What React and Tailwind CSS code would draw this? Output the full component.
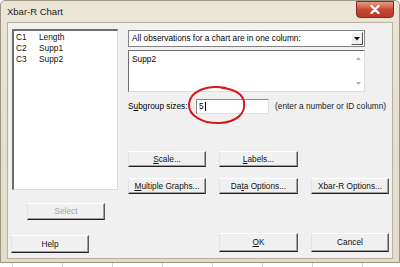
import React from 'react';

const btn =
  'flex items-center justify-center whitespace-nowrap bg-[#f0f0f0] border border-t-white border-l-[#e3e3e3] border-r-[#5a5a5a] border-b-[#1e1e1e] shadow-[inset_-1px_-1px_0_#a0a0a0] text-[#111]';

function Btn({ className = '', children, disabled }) {
  return (
    <div className={`${btn} ${className} ${disabled ? 'text-[#a6a6a6]' : ''}`}>
      {children}
    </div>
  );
}

const U = ({ children }) => <span className="underline underline-offset-1">{children}</span>;

export default function App() {
  return (
    <div
      className="w-[400px] h-[267px] bg-white relative overflow-hidden text-[8.3px] leading-none"
      style={{ fontFamily: '"Liberation Sans", Arial, sans-serif' }}
    >
      {/* window */}
      <div className="w-[400px] h-[263px] bg-gradient-to-b from-[#ebe5d6] to-[#e2dbc8] border border-[#9d9683] rounded-t-[5px] flex flex-col">
        <div className="h-[21px] flex items-center justify-between pl-[6px] pr-[5px]">
          <span className="text-[9.5px] text-[#1d1d1d]">Xbar-R Chart</span>
          <div className="w-[38px] h-[17px] -mt-[4px] rounded-b-[4px] bg-gradient-to-b from-[#e79a88] via-[#c94a33] to-[#b5382a] border border-[#7a2b22] flex items-center justify-center">
            <svg width="10" height="9" viewBox="0 0 10 9">
              <path d="M1.5 1 L8.5 8 M8.5 1 L1.5 8" stroke="white" strokeWidth="2.2" strokeLinecap="round" />
            </svg>
          </div>
        </div>

        {/* client area */}
        <div className="mx-[6px] h-[237px] bg-[#f0f0f0] border border-[#b8b09b] flex pt-[6px] pl-[4px]">
          {/* left column */}
          <div className="w-[106px] flex flex-col">
            <div className="h-[161px] bg-white border-t-2 border-l-2 border-r border-b border-t-[#6d6d6d] border-l-[#6d6d6d] border-r-[#dcdcdc] border-b-[#dcdcdc] pt-px pl-[2px] text-[#111]">
              {[
                ['C1', 'Length'],
                ['C2', 'Supp1'],
                ['C3', 'Supp2'],
              ].map(([c, n]) => (
                <div key={c} className="flex h-[11px] items-center">
                  <span className="w-[23px]">{c}</span>
                  <span>{n}</span>
                </div>
              ))}
            </div>
            <Btn disabled className="ml-[15px] mt-[13px] w-[78px] h-[17px]">
              Select
            </Btn>
            <Btn className="-ml-[1px] mt-[15px] w-[78px] h-[18px]">Help</Btn>
          </div>

          {/* right column */}
          <div className="ml-[10px] w-[262px] flex flex-col">
            <div className="mt-[1px] w-[237px] h-[17px] bg-white border border-[#828282] flex items-center">
              <span className="pl-[3px] flex-1">All observations for a chart are in one column:</span>
              <div className="w-[12px] h-[13px] mr-[1px] bg-[#f0f0f0] border border-t-white border-l-white border-r-[#555] border-b-[#555] flex items-center justify-center">
                <svg width="6" height="4" viewBox="0 0 6 4">
                  <path d="M0 0 H6 L3 3.5 Z" fill="#111" />
                </svg>
              </div>
            </div>
            <div className="mt-[3px] w-[237px] h-[42px] bg-white border border-t-[#6d6d6d] border-l-[#6d6d6d] border-r-[#dcdcdc] border-b-[#dcdcdc] flex">
              <span className="pl-[3px] pt-[4px] flex-1">Supp2</span>
              <div className="w-[11px] flex flex-col justify-between items-center py-[6px]">
                <svg width="5" height="3" viewBox="0 0 5 3"><path d="M0 3 L2.5 0 L5 3 Z" fill="#b0b0b0" /></svg>
                <svg width="5" height="3" viewBox="0 0 5 3"><path d="M0 0 L2.5 3 L5 0 Z" fill="#b0b0b0" /></svg>
              </div>
            </div>
            <div className="mt-[6px] flex items-center h-[16px] whitespace-nowrap">
              <span className="w-[68px]">S<U>u</U>bgroup sizes:</span>
              <div className="w-[73px] h-[15px] bg-white border border-t-[#8a8a8a] border-l-[#8a8a8a] border-r-[#e0e0e0] border-b-[#e0e0e0] flex items-center pl-[2px]">
                5<span className="w-px h-[9px] bg-black ml-[1px]" />
              </div>
              <span className="ml-[6px] text-[#222]">(enter a number or ID column)</span>
            </div>

            <div className="mt-[37px] flex gap-[13px]">
              <Btn className="w-[78px] h-[16px]"><U>S</U>cale...</Btn>
              <Btn className="w-[79px] h-[16px]"><U>L</U>abels...</Btn>
            </div>
            <div className="mt-[11px] flex gap-[13px]">
              <Btn className="w-[78px] h-[16px]"><U>M</U>ultiple Graphs...</Btn>
              <Btn className="w-[79px] h-[16px]">Da<U>t</U>a Options...</Btn>
              <Btn className="w-[78px] h-[16px]">Xbar-R Options...</Btn>
            </div>
            <div className="mt-[39px] ml-[91px] flex gap-[13px]">
              <Btn className="w-[79px] h-[19px]"><U>O</U>K</Btn>
              <Btn className="w-[78px] h-[19px]">Cancel</Btn>
            </div>
          </div>
        </div>
      </div>

      {/* background ticks below the window */}
      <div className="flex h-[4px]">
        {[0, 1, 2, 3, 4, 5, 6, 7].map((i) => (
          <div key={i} className="w-[50px] h-[4px] flex">
            <div className="ml-[12px] w-px h-[4px] bg-[#d0d0d0]" />
          </div>
        ))}
      </div>

      {/* red hand-drawn ellipse around the subgroup input */}
      <svg className="absolute left-[186px] top-[84px]" width="62" height="42" viewBox="0 0 62 42">
        <path
          d="M40 4 C20 0 4 8 3 20 C2 32 18 40 34 39 C50 38 60 30 58 18 C57 10 48 5 36 4"
          fill="none"
          stroke="#d21a1a"
          strokeWidth="2"
          strokeLinecap="round"
        />
      </svg>
    </div>
  );
}
